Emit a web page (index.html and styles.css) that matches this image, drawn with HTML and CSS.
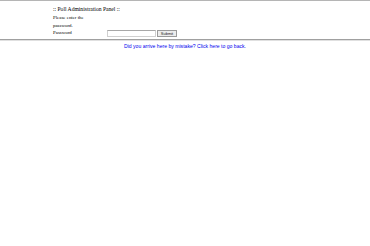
FILE: index.html
```html
<!DOCTYPE html>
<html>
<head>
<meta charset="utf-8">
<link rel="stylesheet" href="styles.css">
<title>Poll Administration Panel</title>
</head>
<body>
<div class="top"></div>
<div class="panel">
  <div class="title">:: Poll Administration Panel ::</div>
  <form class="form">
    <div class="prompt">Please enter the password.</div>
    <div></div>
    <label class="label">Password</label>
    <div class="field">
      <span class="input"></span>
      <span class="button">Submit</span>
    </div>
  </form>
</div>
<div class="rule"></div>
<div class="back"><a class="link" href="#">Did you arrive here by mistake? Click here to go back.</a></div>
</body>
</html>
```
FILE: styles.css
```css
html, body {
  margin: 0;
  padding: 0;
  background: #fff;
}
.top {
  height: 1px;
  background: #b5b5b5;
}
.panel {
  padding: 5px 0 0 53px;
  font-family: "Liberation Serif", serif;
  color: #000;
}
.title {
  font-size: 5.6px;
  line-height: 7px;
  height: 8px;
}
.form {
  display: grid;
  grid-template-columns: 54px auto;
  margin: 0;
}
.prompt {
  font-size: 4.9px;
  line-height: 7.5px;
  width: 36px;
}
.label {
  font-size: 4.9px;
  line-height: 8px;
  align-self: center;
}
.field {
  display: flex;
  align-items: center;
  gap: 1px;
  height: 8px;
}
.input {
  display: block;
  width: 47px;
  height: 5px;
  border: 1px solid #d0d0d0;
  border-top-color: #a8a8a8;
  background: #fff;
}
.button {
  display: block;
  width: 18px;
  height: 5px;
  border: 1px solid #9a9a9a;
  background: #ececec;
  font-family: "Liberation Sans", sans-serif;
  font-size: 4px;
  line-height: 5px;
  text-align: center;
  color: #222;
}
.rule {
  margin-top: 2px;
  height: 1px;
  background: #a0a0a0;
  border-bottom: 1px solid #e0e0e0;
}
.back {
  text-align: center;
  padding-top: 2px;
  font-family: "Liberation Sans", sans-serif;
  font-size: 5.1px;
  line-height: 6px;
}
.link {
  color: #0000ee;
  text-decoration: underline;
}
```
